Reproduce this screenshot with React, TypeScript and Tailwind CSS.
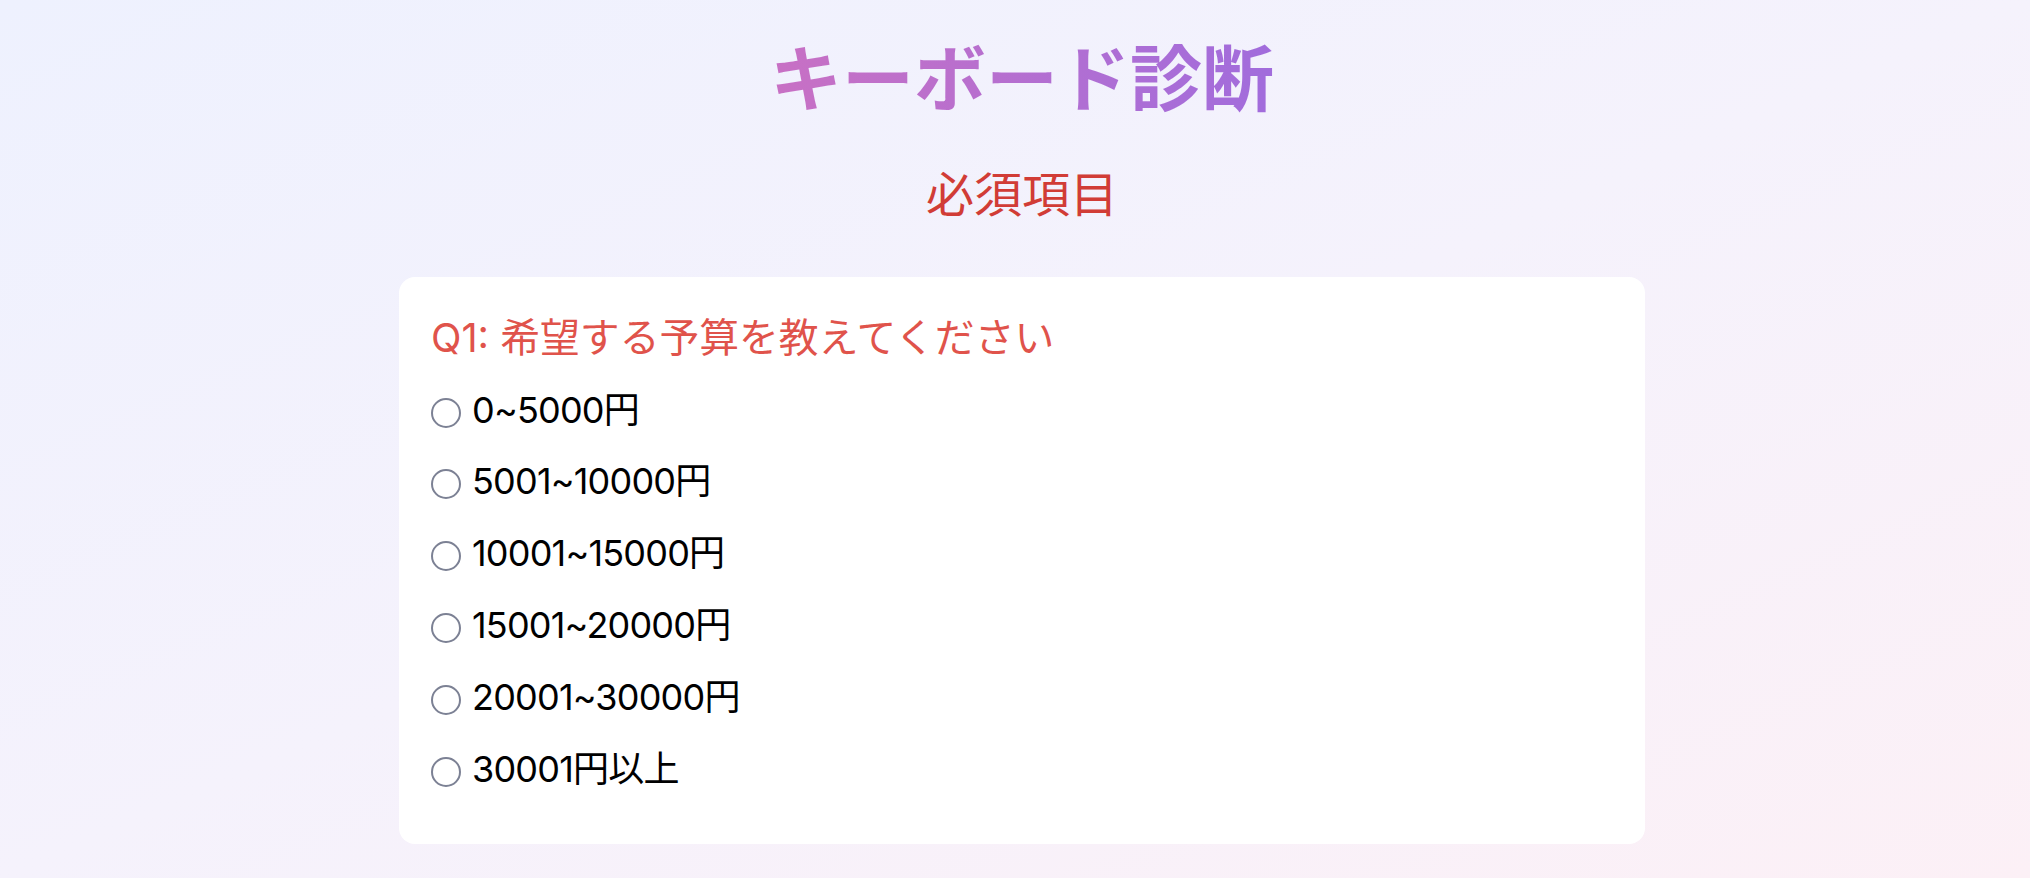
import React from "react";

const options = [
  "0~5000円",
  "5001~10000円",
  "10001~15000円",
  "15001~20000円",
  "20001~30000円",
  "30001円以上",
];

export default function App() {
  const font = {
    fontFamily: 'Inter, "Noto Sans CJK JP", sans-serif',
  };
  return (
    <div
      className="min-h-screen w-full bg-linear-to-br from-[#eef1fe] via-[#f5f2fc] to-[#fcf0f6] pl-[14px] flex flex-col items-center"
      style={font}
    >
      <h1 className="mt-[43px] text-[72px] leading-none font-bold bg-linear-to-r from-[#c870c4] to-[#a16cdc] bg-clip-text text-transparent">
        キーボード診断
      </h1>
      <h2 className="mt-[56px] text-[48px] leading-none text-[#d13c36]">必須項目</h2>
      <div className="mt-[58px] w-[1246px] bg-white rounded-2xl px-8 pt-[31px] pb-[40px]">
        <p className="text-[39.8px] leading-[1.5] text-[#e0534b]">
          Q1: 希望する予算を教えてください
        </p>
        <div className="mt-[6px] flex flex-col">
          {options.map((o) => (
            <label
              key={o}
              className="flex items-center h-[71.8px] text-[36px] tracking-[-0.8px] text-black"
            >
              <span className="mt-[6px] w-[30px] h-[30px] rounded-full border-2 border-[#7c8194] bg-white shrink-0" />
              <span className="ml-[11px]">{o}</span>
            </label>
          ))}
        </div>
      </div>
    </div>
  );
}
